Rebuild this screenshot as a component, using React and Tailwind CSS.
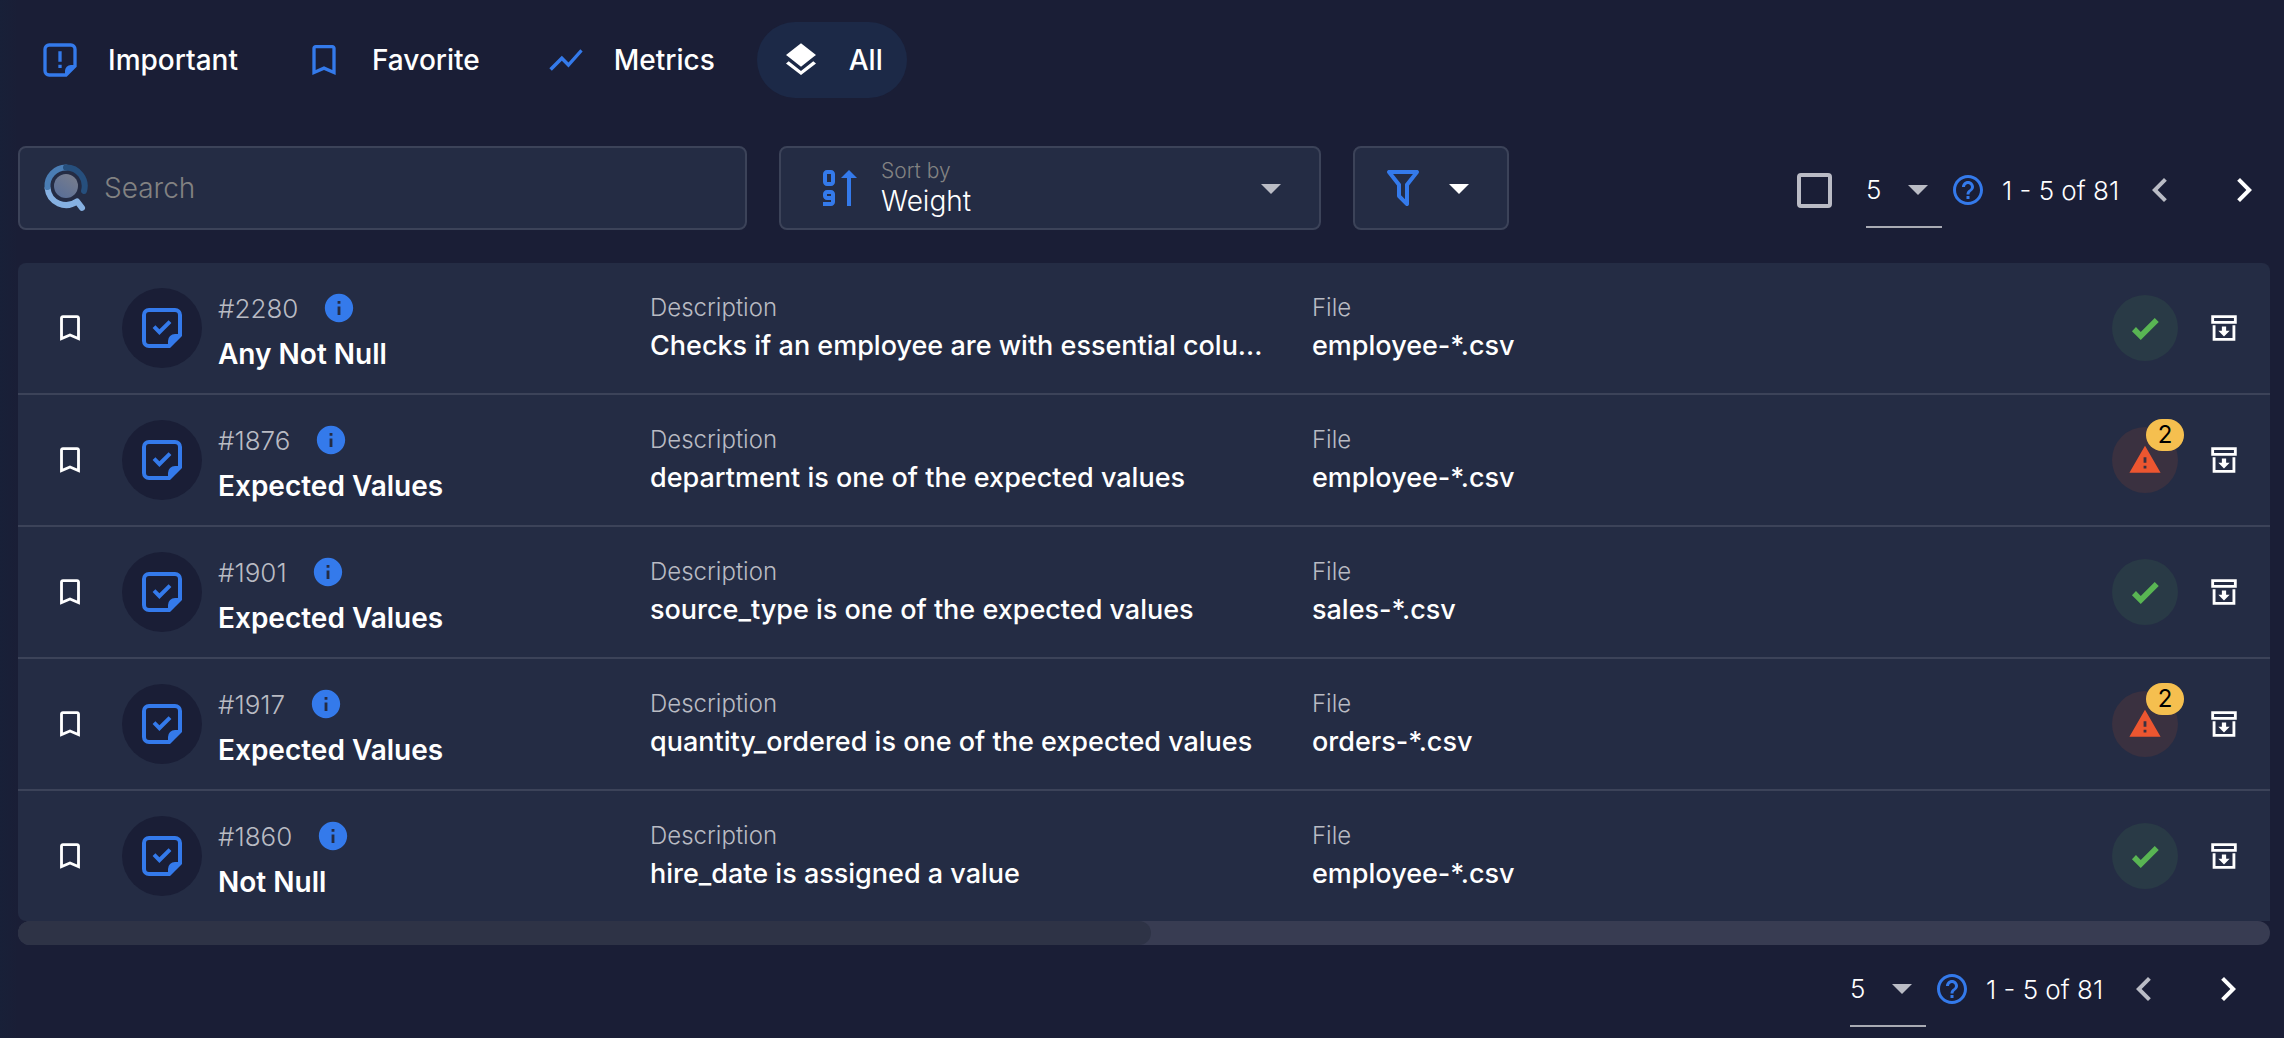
import { useState } from "react";
import {
  MdArrowDropDown,
  MdBookmarkBorder,
  MdChevronLeft,
  MdChevronRight,
  MdHelpOutline,
  MdInfo,
  MdLayers,
  MdShowChart,
  MdWarning,
} from "react-icons/md";

const STICKER =
  "M5.5 2h13A3.5 3.5 0 0 1 22 5.5V16l-6 6H5.5A3.5 3.5 0 0 1 2 18.5v-13A3.5 3.5 0 0 1 5.5 2M5.5 4A1.5 1.5 0 0 0 4 5.5v13A1.5 1.5 0 0 0 5.5 20H15v-1.5a3.5 3.5 0 0 1 3.5-3.5H20V5.5A1.5 1.5 0 0 0 18.5 4z";

function Glyph({ className, children }) {
  return (
    <svg viewBox="0 0 24 24" className={className} fill="currentColor" aria-hidden="true">
      {children}
    </svg>
  );
}

function StickerAlert({ className }) {
  return (
    <Glyph className={className}>
      <path fillRule="evenodd" d={STICKER} />
      <path d="M11 6.7h2v6.300h-2zM11 14.8h2v2h-2z" />
    </Glyph>
  );
}

function StickerCheck({ className }) {
  return (
    <Glyph className={className}>
      <path fillRule="evenodd" d={STICKER} />
      <path d="M7.300 12l1.400-1.400 2 2L15.300 8.100l1.400 1.400-6 6z" />
    </Glyph>
  );
}

function SortNumeric({ className }) {
  return (
    <Glyph className={className}>
      <path d="M19 7h3l-4-4-4 4h3v14h2M9 13H7c-1.100 0-2 .9-2 2v1c0 1.110.9 2 2 2h2v1H5v2h4c1.110 0 2-.89 2-2v-4c0-1.100-.89-2-2-2m0 3H7v-1h2M9 3H7c-1.100 0-2 .9-2 2v4c0 1.110.9 2 2 2h2c1.110 0 2-.89 2-2V5c0-1.100-.89-2-2-2m0 6H7V5h2" />
    </Glyph>
  );
}

function FilterIcon({ className }) {
  return (
    <Glyph className={className}>
      <path d="M15,19.88C15.04,20.18 14.94,20.5 14.71,20.71C14.32,21.1 13.69,21.1 13.3,20.71L9.29,16.7C9.06,16.47 8.96,16.16 9,15.87V10.75L4.21,4.62C3.87,4.19 3.95,3.56 4.38,3.22C4.57,3.08 4.78,3 5,3V3H19V3C19.22,3 19.43,3.08 19.62,3.22C20.05,3.56 20.13,4.19 19.79,4.62L15,10.75V19.88M7.04,5L11,10.06V15.58L13,17.58V10.05L16.96,5H7.04Z" />
    </Glyph>
  );
}

function ArchiveIcon({ className }) {
  return (
    <Glyph className={className}>
      <path d="M20 21H4V10H6V19H18V10H20V21M3 3H21V9H3V3M5 5V7H19V5M10.5 11V14H8L12 18L16 14H13.5V11" />
    </Glyph>
  );
}

function CheckBold({ className }) {
  return (
    <Glyph className={className}>
      <path d="M9,20.42L2.79,14.21L5.62,11.38L9,14.77L18.88,4.88L21.71,7.71L9,20.42Z" />
    </Glyph>
  );
}

function SearchLogo({ className }) {
  return (
    <svg viewBox="0 0 44 48" className={className} fill="none" strokeWidth="6" strokeLinecap="round" aria-hidden="true">
      <defs>
        <linearGradient id="lens" x1="1" y1="0" x2="0.3" y2="1">
          <stop offset="0" stopColor="#7b7f8c" />
          <stop offset="1" stopColor="#5a6f97" />
        </linearGradient>
      </defs>
      <path d="M3.6 24.5A18.5 18.5 0 0 0 33 37.300l5 6.500" stroke="#86b1e2" strokeLinejoin="round" />
      <path d="M3.5 23A18.5 18.5 0 0 1 22 3.5" stroke="#4a7db4" />
      <path d="M22 3.5a18.5 18.5 0 0 1 18 23.500" stroke="#264f7d" />
      <circle cx="22" cy="22" r="12" fill="url(#lens)" />
    </svg>
  );
}

const tabs = [
  { label: "Important", Icon: StickerAlert },
  { label: "Favorite", Icon: MdBookmarkBorder },
  { label: "Metrics", Icon: MdShowChart },
  { label: "All", Icon: MdLayers },
];

const checks = [
  { id: "#2280", name: "Any Not Null", description: "Checks if an employee are with essential colu...", file: "employee-*.csv", alerts: 0 },
  { id: "#1876", name: "Expected Values", description: "department is one of the expected values", file: "employee-*.csv", alerts: 2 },
  { id: "#1901", name: "Expected Values", description: "source_type is one of the expected values", file: "sales-*.csv", alerts: 0 },
  { id: "#1917", name: "Expected Values", description: "quantity_ordered is one of the expected values", file: "orders-*.csv", alerts: 2 },
  { id: "#1860", name: "Not Null", description: "hire_date is assigned a value", file: "employee-*.csv", alerts: 0 },
];

function Pagination({ id }) {
  return (
    <div className="flex items-center">
      <div className="relative flex h-[76px] w-[76px] items-center border-b-2 border-[#a9abb4]">
        <select id={id} aria-label="Rows per page" defaultValue="5" className="h-full w-full appearance-none bg-transparent text-[26px] font-light text-white outline-none">
          <option>5</option>
          <option>10</option>
          <option>25</option>
        </select>
        <MdArrowDropDown className="pointer-events-none absolute right-0 size-12 text-[#babcc5]" />
      </div>
      <button type="button" aria-label="Help" className="ml-2 text-[#347aeb]">
        <MdHelpOutline className="size-9" />
      </button>
      <span className="ml-4 w-[118px] text-[26px] font-light whitespace-nowrap">1 - 5 of 81</span>
      <button type="button" aria-label="Previous page" className="ml-4 text-[#babcc5]">
        <MdChevronLeft className="size-12" />
      </button>
      <button type="button" aria-label="Next page" className="ml-9">
        <MdChevronRight className="size-12" />
      </button>
    </div>
  );
}

function Field({ label, value }) {
  return (
    <div className="pt-1">
      <div className="text-2xl leading-8 font-light text-[#b9bbc3]">{label}</div>
      <div className="text-[27px] leading-11 font-medium whitespace-nowrap">{value}</div>
    </div>
  );
}

function CheckRow({ check }) {
  return (
    <li className="grid h-[132px] grid-cols-[104px_96px_432fr_662fr_800fr_66px_92px] items-center border-b-2 border-[#3c4359] last:h-[130px] last:border-b-0">
      <button type="button" aria-label={"Bookmark " + check.id} className="justify-self-center">
        <MdBookmarkBorder className="size-[34px]" />
      </button>
      <span className="flex size-20 items-center justify-center rounded-full bg-[#1a1e36] text-[#347aeb]">
        <StickerCheck className="size-12" />
      </span>
      <div className="pt-2">
        <div className="flex h-9 items-center gap-6">
          <span className="text-[26px] font-light text-[#b9bbc3]">{check.id}</span>
          <button type="button" aria-label={"About " + check.id} className="text-[#347aeb]">
            <MdInfo className="size-[34px]" />
          </button>
        </div>
        <div className="mt-2 text-[28px] leading-10 font-semibold">{check.name}</div>
      </div>
      <Field label="Description" value={check.description} />
      <Field label="File" value={check.file} />
      {check.alerts > 0 ? (
        <span className="relative flex size-[66px] items-center justify-center rounded-full bg-[#3a3140] text-[#ec5630]">
          <MdWarning className="size-[34px]" />
          <span className="absolute -top-2 -right-1.5 flex h-8 w-[38px] items-center justify-center rounded-full bg-[#f5bf4f] text-2xl text-black">
            {check.alerts}
          </span>
        </span>
      ) : (
        <span className="flex size-[66px] items-center justify-center rounded-full bg-[#293a46] text-[#59b553]">
          <CheckBold className="size-[34px]" />
        </span>
      )}
      <button type="button" aria-label={"Archive " + check.id} className="justify-self-center">
        <ArchiveIcon className="size-[34px]" />
      </button>
    </li>
  );
}

export default function App() {
  const [active, setActive] = useState("All");
  return (
    <main className="min-h-screen bg-[linear-gradient(to_right,#182038,#1a1e36_18px)] pr-3.5 pl-[18px] font-['Inter',sans-serif] text-white">
      <nav className="-ml-0.5 flex gap-[18px] pt-[22px]">
        {tabs.map(({ label, Icon }) => (
          <button
            key={label}
            type="button"
            onClick={() => setActive(label)}
            className={
              active === label
                ? "flex h-[76px] items-center gap-7 rounded-full bg-[#1c2947] px-6 text-[28px] font-medium text-white"
                : "flex h-[76px] items-center gap-7 rounded-full px-6 text-[28px] font-medium text-white"
            }
          >
            <Icon className={active === label ? "size-10 text-white" : "size-10 text-[#347aeb]"} />
            {label}
          </button>
        ))}
      </nav>

      <div className="mt-12 flex items-center gap-8">
        <label className="flex h-[84px] w-1/3 max-w-[729px] items-center gap-4 rounded-lg border-2 border-[#3c4359] bg-[#242c44] pl-6">
          <SearchLogo className="h-12 w-11 shrink-0" />
          <input type="search" placeholder="Search" aria-label="Search" className="h-full w-full bg-transparent text-[28px] font-light outline-none placeholder:text-[#828282]" />
        </label>
        <div className="relative flex h-[84px] w-1/4 max-w-[542px] items-center rounded-lg border-2 border-[#3c4359] bg-[#242c44]">
          <SortNumeric className="ml-8 size-12 text-[#347aeb]" />
          <div className="ml-5 flex flex-1 flex-col pt-0.5">
            <label htmlFor="sort" className="text-[21px] leading-6 font-light text-[#828282]">Sort by</label>
            <select id="sort" defaultValue="Weight" className="h-9 w-full appearance-none bg-transparent text-[28px] leading-9 font-light outline-none">
              <option>Weight</option>
              <option>Name</option>
            </select>
          </div>
          <MdArrowDropDown className="pointer-events-none absolute right-6 size-12 text-[#babcc5]" />
        </div>
        <button type="button" aria-label="Filter" className="flex h-[84px] w-[156px] items-center justify-center gap-2 rounded-lg border-2 border-[#3c4359] bg-[#242c44]">
          <FilterIcon className="size-12 text-[#347aeb]" />
          <MdArrowDropDown className="size-12" />
        </button>
        <div className="ml-auto flex items-center gap-[34px] pt-1 pr-0.5">
          <input type="checkbox" aria-label="Select all" className="size-[35px] appearance-none rounded-sm border-4 border-[#babbc5] checked:bg-[#347aeb]" />
          <Pagination id="rows-top" />
        </div>
      </div>

      <ul className="mt-[33px] rounded-t-lg rounded-bl-lg bg-[#242c44]">
        {checks.map((check) => (
          <CheckRow key={check.id} check={check} />
        ))}
      </ul>
      <div className="h-6 rounded-full bg-[#383c52]">
        <div className="h-6 w-[50.3%] rounded-full bg-[#2e3346]" />
      </div>

      <div className="mt-1.5 flex justify-end pr-[18px]">
        <Pagination id="rows-bottom" />
      </div>
    </main>
  );
}
